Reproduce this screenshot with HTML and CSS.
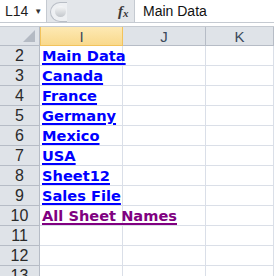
FILE: index.html
```html
<!DOCTYPE html>
<html lang="en">
<head>
<meta charset="UTF-8">
<title>Sheet Names</title>
<link rel="stylesheet" href="styles.css">
</head>
<body>
<div class="formula-bar">
  <div class="name-box">L14<span class="drop">&#9660;</span></div>
  <div class="knob"><span class="dot"></span></div>
  <div class="fx"><i>f</i><i class="x">x</i></div>
  <div class="formula">Main Data</div>
</div>
<div class="bar-gap"></div>
<div class="sheet">
  <div class="corner"><span class="tri"></span></div>
  <div class="col-head active">I</div>
  <div class="col-head">J</div>
  <div class="col-head">K</div>

  <div class="row-head">2</div><div class="cell"><a href="#">Main Data</a></div><div class="cell"></div><div class="cell"></div>
  <div class="row-head">3</div><div class="cell"><a href="#">Canada</a></div><div class="cell"></div><div class="cell"></div>
  <div class="row-head">4</div><div class="cell"><a href="#">France</a></div><div class="cell"></div><div class="cell"></div>
  <div class="row-head">5</div><div class="cell"><a href="#">Germany</a></div><div class="cell"></div><div class="cell"></div>
  <div class="row-head">6</div><div class="cell"><a href="#">Mexico</a></div><div class="cell"></div><div class="cell"></div>
  <div class="row-head">7</div><div class="cell"><a href="#">USA</a></div><div class="cell"></div><div class="cell"></div>
  <div class="row-head">8</div><div class="cell"><a href="#">Sheet12</a></div><div class="cell"></div><div class="cell"></div>
  <div class="row-head">9</div><div class="cell"><a href="#">Sales File</a></div><div class="cell"></div><div class="cell"></div>
  <div class="row-head">10</div><div class="cell"><a class="visited" href="#">All Sheet Names</a></div><div class="cell"></div><div class="cell"></div>
  <div class="row-head">11</div><div class="cell"></div><div class="cell"></div><div class="cell"></div>
  <div class="row-head">12</div><div class="cell"></div><div class="cell"></div><div class="cell"></div>
  <div class="row-head">13</div><div class="cell"></div><div class="cell"></div><div class="cell"></div>
</div>
</body>
</html>
```

FILE: styles.css
```css
body {
  margin: 0;
  width: 274px;
  height: 276px;
  overflow: hidden;
  background: #fff;
  font-family: "Liberation Sans", Arial, sans-serif;
}

/* formula bar */
.formula-bar {
  display: flex;
  height: 22px;
  background: #e3e6ea;
  border-bottom: 1px solid #c5cad1;
}

.name-box {
  width: 47px;
  background: #fff;
  border-right: 1px solid #c5cad1;
  display: flex;
  align-items: center;
  padding-left: 5px;
  box-sizing: border-box;
  font-size: 14px;
  color: #1e1e1e;
}

.drop {
  font-size: 8px;
  margin-left: 6px;
  color: #333;
}

.knob {
  width: 16px;
  height: 18px;
  margin: 2px 0 0 3px;
  border: 1px solid #b9bec6;
  border-right: none;
  border-radius: 10px 0 0 10px;
  background: #eef0f3;
  position: relative;
}

.dot {
  position: absolute;
  left: 4px;
  top: 3px;
  width: 11px;
  height: 11px;
  border-radius: 50%;
  background: linear-gradient(#f6f7f8, #c3c7cc);
}

.fx {
  margin-left: 51px;
  width: 16px;
  display: flex;
  align-items: center;
  font-family: "Liberation Serif", serif;
  font-size: 15px;
  font-weight: bold;
  color: #3a3a3a;
  border-right: 1px solid #c5cad1;
}

.fx .x {
  font-size: 11px;
  margin-top: 3px;
}

.formula {
  flex: 1;
  background: #fff;
  padding-left: 8px;
  display: flex;
  align-items: center;
  font-family: "Liberation Sans", Arial, sans-serif;
  font-size: 14px;
  color: #111;
}

.bar-gap {
  height: 3px;
  background: #fff;
  border-bottom: 1px solid #c5cad1;
}

/* sheet grid */
.sheet {
  display: grid;
  grid-template-columns: 40px 83px 83px 1fr;
  grid-template-rows: 19px repeat(12, 20px);
}

.corner {
  background: #dfe3e8;
  border-right: 1px solid #b6bcc6;
  border-bottom: 1px solid #b6bcc6;
  position: relative;
}

.tri {
  position: absolute;
  right: 4px;
  bottom: 3px;
  width: 0;
  height: 0;
  border-left: 12px solid transparent;
  border-bottom: 12px solid #b4bac3;
}

.col-head {
  background: #dfe3e8;
  border-right: 1px solid #b6bcc6;
  border-bottom: 1px solid #b6bcc6;
  display: flex;
  align-items: center;
  justify-content: center;
  font-size: 15px;
  color: #3b4a5c;
}

.col-head.active {
  background: linear-gradient(#fde9b4, #f9d98c);
  border-right-color: #f2c35c;
  border-bottom-color: #f2c35c;
  border-left: 1px solid #f2c35c;
}

.row-head {
  background: #dfe3e8;
  border-right: 1px solid #b6bcc6;
  border-bottom: 1px solid #b6bcc6;
  display: flex;
  align-items: center;
  justify-content: center;
  font-size: 16px;
  color: #2a2a2a;
}

.cell {
  border-bottom: 1px solid #dadfe8;
  border-right: 1px solid #dadfe8;
  display: flex;
  align-items: flex-end;
  padding-left: 2px;
  white-space: nowrap;
  overflow: visible;
}

.cell a {
  font-family: "DejaVu Sans", Verdana, sans-serif;
  font-weight: bold;
  font-size: 14.6px;
  color: #0000ff;
  text-decoration: underline;
  text-decoration-thickness: 2px;
  text-underline-offset: 2px;
  line-height: 18px;
}

.cell a.visited {
  color: #800080;
}
```
